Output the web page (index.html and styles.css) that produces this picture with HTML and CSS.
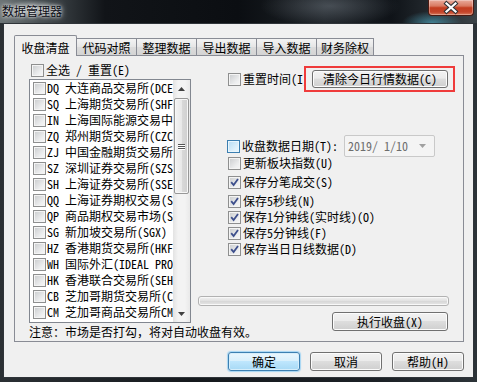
FILE: index.html
```html
<!DOCTYPE html>
<html lang="zh-CN">
<head>
    <meta charset="UTF-8">
    <title>数据管理器</title>
    <link rel="stylesheet" href="styles.css">
</head>
<body>
    <div class="window">
        <div class="titlebar">
            <span class="title">数据管理器</span>
            <span class="close">
                <svg width="44" height="15" viewBox="0 0 44 15">
                    <path d="M17.5 3.5 L26.5 11.5 M26.5 3.5 L17.5 11.5" stroke="#2e3236" stroke-width="4.2" stroke-linecap="square"/>
                    <path d="M17.5 3.5 L26.5 11.5 M26.5 3.5 L17.5 11.5" stroke="#ffffff" stroke-width="2.2" stroke-linecap="square"/>
                </svg>
            </span>
        </div>

        <div class="client">
            <div class="tabs">
                <div class="tab active">收盘清盘</div>
                <div class="tab">代码对照</div>
                <div class="tab">整理数据</div>
                <div class="tab">导出数据</div>
                <div class="tab">导入数据</div>
                <div class="tab last">财务除权</div>
            </div>

            <div class="panel">
                <div class="left">
                    <div class="select-all"><span class="cb"></span>全选 / 重置(E)</div>
                    <div class="listbox">
                        <ul class="items">
                            <li><span class="cb"></span>DQ 大连商品交易所(DCE)</li>
                            <li><span class="cb"></span>SQ 上海期货交易所(SHFE)</li>
                            <li><span class="cb"></span>IN 上海国际能源交易中心(INE)</li>
                            <li><span class="cb"></span>ZQ 郑州期货交易所(CZCE)</li>
                            <li><span class="cb"></span>ZJ 中国金融期货交易所(CFFEX)</li>
                            <li><span class="cb"></span>SZ 深圳证券交易所(SZSE)</li>
                            <li><span class="cb"></span>SH 上海证券交易所(SSE)</li>
                            <li><span class="cb"></span>QQ 上海证券期权交易(SSE)</li>
                            <li><span class="cb"></span>QP 商品期权交易市场(SHFE)</li>
                            <li><span class="cb"></span>SG 新加坡交易所(SGX)</li>
                            <li><span class="cb"></span>HZ 香港期货交易所(HKFE)</li>
                            <li><span class="cb"></span>WH 国际外汇(IDEAL PRO)</li>
                            <li><span class="cb"></span>HK 香港联合交易所(SEHK)</li>
                            <li><span class="cb"></span>CB 芝加哥期货交易所(CBOT)</li>
                            <li><span class="cb"></span>CM 芝加哥商品交易所CME</li>
                        </ul>
                        <div class="scrollbar">
                            <div class="sb-btn">
                                <svg width="7" height="4" viewBox="0 0 7 4"><path d="M0 4 L3.5 0 L7 4 Z" fill="#404040"/></svg>
                            </div>
                            <div class="sb-track">
                                <div class="sb-thumb">
                                    <span class="grip"></span>
                                    <span class="grip"></span>
                                    <span class="grip"></span>
                                </div>
                            </div>
                            <div class="sb-btn">
                                <svg width="7" height="4" viewBox="0 0 7 4"><path d="M0 0 L7 0 L3.5 4 Z" fill="#404040"/></svg>
                            </div>
                        </div>
                    </div>
                    <div class="note">注意：市场是否打勾，将对自动收盘有效。</div>
                </div>

                <div class="right">
                    <div class="reset-row">
                        <span class="cb"></span>
                        <span class="reset-label">重置时间(I)</span>
                        <div class="highlight">
                            <div class="btn clear-btn">清除今日行情数据(C)</div>
                        </div>
                    </div>

                    <div class="date-row">
                        <span class="cb hover"></span>
                        <span class="opt-label">收盘数据日期(T):</span>
                        <div class="combo">
                            <span>2019/ 1/10</span>
                            <svg width="7" height="4" viewBox="0 0 7 4"><path d="M0 0 L7 0 L3.5 4 Z" fill="#a0a0a0"/></svg>
                        </div>
                    </div>

                    <div class="opt opt-1"><span class="cb"></span><span class="opt-label">更新板块指数(U)</span></div>
                    <div class="opt opt-2"><span class="cb checked"></span><span class="opt-label">保存分笔成交(S)</span></div>
                    <div class="opt opt-2"><span class="cb checked"></span><span class="opt-label">保存5秒线(N)</span></div>
                    <div class="opt"><span class="cb checked"></span><span class="opt-label">保存1分钟线(实时线)(O)</span></div>
                    <div class="opt"><span class="cb checked"></span><span class="opt-label">保存5分钟线(F)</span></div>
                    <div class="opt"><span class="cb checked"></span><span class="opt-label">保存当日日线数据(D)</span></div>

                    <div class="progress"></div>
                    <div class="btn run-btn">执行收盘(X)</div>
                </div>
            </div>

            <div class="dialog-buttons">
                <div class="btn default">确定</div>
                <div class="btn">取消</div>
                <div class="btn">帮助(H)</div>
            </div>
        </div>
    </div>
</body>
</html>
```

FILE: styles.css
```css
body {
    margin: 0;
    width: 477px;
    height: 382px;
    overflow: hidden;
    font-family: "Noto Sans Mono CJK SC", "Noto Sans CJK SC", monospace;
    font-size: 12px;
    line-height: 14px;
    color: #000;
    background: linear-gradient(to right, #2b3034, #15191d 40%, #1c2126 80%, #2c3338);
}
.window {
    display: flex;
    flex-direction: column;
    height: 382px;
}

/* title bar */
.titlebar {
    height: 23px;
    display: flex;
    align-items: flex-start;
    background:
        radial-gradient(ellipse 30px 12px at 432px 23px, rgba(90, 200, 230, 0.55), transparent),
        radial-gradient(ellipse 70px 20px at 330px 6px, rgba(150, 160, 170, 0.35), transparent),
        linear-gradient(to right, #6c7476 0%, #40474b 10%, #111418 22%, #0b0e12 50%, #1d2227 68%, #0f1318 82%, #3b4348 100%);
}
.title {
    padding: 3px 4px 0 2px;
    line-height: 16px;
    font-family: "Noto Sans CJK SC", sans-serif;
    font-size: 12px;
    color: #0b0b14;
    text-shadow: 0 0 6px rgba(255, 255, 255, 0.9), 0 0 3px rgba(255, 255, 255, 0.8);
    background: radial-gradient(ellipse at center, rgba(190, 196, 196, 0.7), rgba(190, 196, 196, 0) 70%);
}
.close {
    margin-left: auto;
    margin-right: 3px;
    width: 44px;
    height: 15px;
    border: 1px solid #4a1a12;
    border-top: none;
    border-radius: 0 0 4px 4px;
    background: linear-gradient(#e9ab9c 0%, #d97a62 40%, #c33d20 52%, #c4442a 80%, #d87a5c 100%);
    box-shadow: inset 0 0 0 1px rgba(255, 255, 255, 0.3);
}
.close svg { display: block; }

/* client area */
.client {
    flex: 1;
    margin: 0 3px 4px 3px;
    border: 1px solid #2f3439;
    background: #f0f0f0;
    padding: 11px 9px 0 10px;
    display: flex;
    flex-direction: column;
}

/* tabs */
.tabs {
    display: flex;
    align-items: flex-end;
    height: 21px;
    margin-bottom: -1px;
    position: relative;
    z-index: 1;
}
.tab {
    box-sizing: border-box;
    width: 61px;
    height: 17px;
    margin-bottom: 1px;
    margin-left: -1px;
    border: 1px solid #898c95;
    border-bottom: none;
    background: linear-gradient(#f3f3f3, #e6e6e6 50%, #dcdcdc 50%, #d4d4d4);
    text-align: center;
    line-height: 17px;
}
.tab.active {
    width: 63px;
    height: 21px;
    margin: 0;
    background: #f0f0f0;
    line-height: 21px;
    padding-top: 1px;
    border-radius: 2px 2px 0 0;
}
.tab.last { width: 58px; }

.panel {
    height: 287px;
    box-sizing: border-box;
    border: 1px solid #898c95;
    background: #f0f0f0;
    display: flex;
}

/* checkbox */
.cb {
    flex: none;
    box-sizing: border-box;
    width: 13px;
    height: 13px;
    border: 1px solid #8e8f8f;
    background: linear-gradient(135deg, #c9cbcd, #eeeff0 70%, #f6f6f6);
    box-shadow: inset 0 0 0 1px #f4f4f4;
}
.cb.hover {
    border-color: #3c7fb1;
    background: linear-gradient(135deg, #b6dcf4, #e3f3fc 75%);
    box-shadow: inset 0 0 0 1px #e9f6fd;
}
.cb.checked {
    background:
        url("data:image/svg+xml;utf8,<svg xmlns='http://www.w3.org/2000/svg' width='11' height='11'><path d='M2.2 5.2 L4.6 8 L9 2' fill='none' stroke='%233d4f8c' stroke-width='1.8'/></svg>") center / 11px 11px no-repeat,
        linear-gradient(135deg, #c9cbcd, #eeeff0 70%, #f6f6f6);
}

/* left column */
.left {
    width: 162px;
    margin-left: 14px;
    padding-top: 7px;
}
.select-all {
    display: flex;
    align-items: center;
    gap: 2px;
    height: 14px;
    padding-left: 2px;
}
.listbox {
    margin-top: 2px;
    height: 244px;
    box-sizing: border-box;
    border: 1px solid #828790;
    background: #fff;
    display: flex;
}
.items {
    flex: 1;
    margin: 0;
    padding: 0;
    list-style: none;
    overflow: hidden;
}
.items li {
    display: flex;
    align-items: center;
    gap: 1px;
    height: 16px;
    padding-left: 3px;
    white-space: nowrap;
}
.scrollbar {
    width: 17px;
    display: flex;
    flex-direction: column;
    background: linear-gradient(to right, #e3e3e3, #f3f3f3 30%, #f3f3f3 70%, #e9e9e9);
}
.sb-btn {
    height: 17px;
    display: flex;
    align-items: center;
    justify-content: center;
}
.sb-track {
    flex: 1;
    padding-top: 1px;
}
.sb-thumb {
    box-sizing: border-box;
    height: 96px;
    margin: 0 1px;
    border: 1px solid #979797;
    border-radius: 2px;
    background: linear-gradient(to right, #f4f4f4, #e8e8e8 50%, #d9d9d9 50%, #cfcfcf);
    box-shadow: inset 0 0 0 1px #f7f7f7;
    display: flex;
    flex-direction: column;
    justify-content: center;
    align-items: center;
    gap: 1px;
}
.grip {
    width: 7px;
    height: 1px;
    background: #555;
    box-shadow: 0 1px 0 #fff;
}
.note {
    margin-top: 2px;
    line-height: 14px;
    white-space: nowrap;
}

/* right column */
.right {
    flex: 1;
    margin-left: 7px;
    padding-right: 6px;
    display: flex;
    flex-direction: column;
}
.reset-row {
    margin-top: 10px;
    height: 26px;
    display: flex;
    align-items: center;
    padding-left: 30px;
}
.reset-label {
    width: 61px;
    margin-left: 2px;
    overflow: hidden;
    white-space: nowrap;
}
.highlight {
    box-sizing: border-box;
    height: 26px;
    border: 2px solid #ef3b3b;
    padding: 2px 5px 2px 6px;
}
.btn {
    box-sizing: border-box;
    height: 19px;
    border: 1px solid #707070;
    border-radius: 3px;
    background: linear-gradient(#f2f2f2, #ebebeb 45%, #dddddd 50%, #cfcfcf);
    box-shadow: inset 0 0 0 1px #fcfcfc;
    text-align: center;
    line-height: 17px;
    white-space: nowrap;
}
.clear-btn {
    width: 136px;
    height: 18px;
    line-height: 16px;
}
.date-row {
    margin-top: 43px;
    height: 22px;
    display: flex;
    align-items: center;
    padding-left: 29px;
}
.opt-label {
    margin-left: 2px;
    white-space: nowrap;
}
.combo {
    box-sizing: border-box;
    width: 91px;
    height: 22px;
    margin-left: 6px;
    border: 1px solid #c9c9c9;
    border-radius: 2px;
    background: #f4f4f4;
    color: #6d6d6d;
    display: flex;
    align-items: center;
    justify-content: space-between;
    padding: 0 8px 0 3px;
    white-space: pre;
}
.opt {
    height: 16px;
    display: flex;
    align-items: center;
    padding-left: 30px;
}
.opt-1 { margin-top: -2px; }
.opt-2 { margin-top: 3px; }
.progress {
    margin-top: 39px;
    width: 251px;
    height: 10px;
    box-sizing: border-box;
    border: 1px solid #b2b2b2;
    border-radius: 3px;
    background: linear-gradient(#f3f3f3, #e0e0e0 50%, #d6d6d6 50%, #e6e6e6);
    box-shadow: inset 0 0 0 1px #f8f8f8;
}
.run-btn {
    margin-top: 6px;
    align-self: flex-end;
    margin-right: 9px;
    width: 116px;
}

/* bottom buttons */
.dialog-buttons {
    margin-top: 10px;
    display: flex;
    justify-content: flex-end;
    gap: 10px;
}
.dialog-buttons .btn { width: 72px; }
.btn.default {
    border-color: #3c7fb1;
    background: linear-gradient(#eaf6fd, #d9f0fc 45%, #bee6fd 50%, #a7d9f5);
    box-shadow: inset 0 0 0 1px #d6eefb, 0 0 1px 1px #a5d5f3;
}
```
